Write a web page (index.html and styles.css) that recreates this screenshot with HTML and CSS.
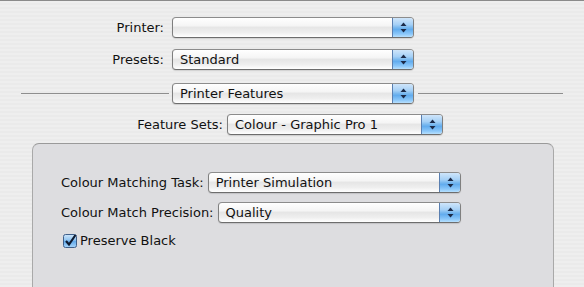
FILE: index.html
```html
<!DOCTYPE html>
<html>
<head>
<meta charset="utf-8">
<link rel="stylesheet" href="styles.css">
</head>
<body>
<div class="sheet">
  <div class="row row-printer">
    <span class="label">Printer:</span>
    <div class="popup popup-wide">
      <span class="popup-text"></span>
      <span class="popup-btn"><svg width="7" height="11" viewBox="0 0 7 11"><path d="M3.5 0.5 L6.5 4 H0.5 Z" fill="#1c2a48"/><path d="M3.5 10.5 L6.5 7 H0.5 Z" fill="#1c2a48"/></svg></span>
    </div>
  </div>
  <div class="row row-presets">
    <span class="label">Presets:</span>
    <div class="popup popup-wide">
      <span class="popup-text">Standard</span>
      <span class="popup-btn"><svg width="7" height="11" viewBox="0 0 7 11"><path d="M3.5 0.5 L6.5 4 H0.5 Z" fill="#1c2a48"/><path d="M3.5 10.5 L6.5 7 H0.5 Z" fill="#1c2a48"/></svg></span>
    </div>
  </div>
  <div class="row row-sep">
    <span class="rule rule-left"></span>
    <div class="popup popup-wide">
      <span class="popup-text">Printer Features</span>
      <span class="popup-btn"><svg width="7" height="11" viewBox="0 0 7 11"><path d="M3.5 0.5 L6.5 4 H0.5 Z" fill="#1c2a48"/><path d="M3.5 10.5 L6.5 7 H0.5 Z" fill="#1c2a48"/></svg></span>
    </div>
    <span class="rule rule-right"></span>
  </div>
  <div class="row row-sets">
    <span class="label-sets">Feature Sets:</span>
    <div class="popup popup-sets">
      <span class="popup-text">Colour - Graphic Pro 1</span>
      <span class="popup-btn"><svg width="7" height="11" viewBox="0 0 7 11"><path d="M3.5 0.5 L6.5 4 H0.5 Z" fill="#1c2a48"/><path d="M3.5 10.5 L6.5 7 H0.5 Z" fill="#1c2a48"/></svg></span>
    </div>
  </div>
  <div class="panel">
    <div class="prow prow-first">
      <span class="plabel">Colour Matching Task:</span>
      <div class="popup popup-fill">
        <span class="popup-text">Printer Simulation</span>
        <span class="popup-btn"><svg width="7" height="11" viewBox="0 0 7 11"><path d="M3.5 0.5 L6.5 4 H0.5 Z" fill="#1c2a48"/><path d="M3.5 10.5 L6.5 7 H0.5 Z" fill="#1c2a48"/></svg></span>
      </div>
    </div>
    <div class="prow prow-second">
      <span class="plabel">Colour Match Precision:</span>
      <div class="popup popup-fill">
        <span class="popup-text">Quality</span>
        <span class="popup-btn"><svg width="7" height="11" viewBox="0 0 7 11"><path d="M3.5 0.5 L6.5 4 H0.5 Z" fill="#1c2a48"/><path d="M3.5 10.5 L6.5 7 H0.5 Z" fill="#1c2a48"/></svg></span>
      </div>
    </div>
    <label class="check-row">
      <span class="checkbox"><svg width="14" height="14" viewBox="0 0 14 14"><defs><linearGradient id="cb" x1="0" y1="0" x2="0" y2="1"><stop offset="0" stop-color="#cfe6fb"/><stop offset="0.45" stop-color="#8ec3f0"/><stop offset="0.5" stop-color="#5ea7ea"/><stop offset="1" stop-color="#a9d6fb"/></linearGradient></defs><rect x="0.5" y="0.5" width="13" height="13" rx="2" fill="url(#cb)" stroke="#3f5f8a"/><path d="M3 7 L6 10.5 L12.5 1" fill="none" stroke="#0e1a30" stroke-width="2.2"/></svg></span>
      <span class="check-text">Preserve Black</span>
    </label>
  </div>
</div>
</body>
</html>
```
FILE: styles.css
```css
html, body {
  margin: 0;
  padding: 0;
}
body {
  width: 584px;
  height: 287px;
  overflow: hidden;
  background: #ececec;
  font-family: "DejaVu Sans", sans-serif;
  font-size: 13px;
  color: #111;
}
.sheet {
  height: 287px;
  box-sizing: border-box;
  border-top: 1px solid #8a8a8a;
  overflow: hidden;
  background: repeating-linear-gradient(#eeeeee 0, #eeeeee 2px, #eaeaea 2px, #eaeaea 4px);
}
.row {
  display: flex;
  align-items: center;
  height: 21px;
}
.row-printer { margin-top: 16px; }
.row-presets { margin-top: 11px; }
.row-sep { margin-top: 13px; }
.row-sets { margin-top: 10px; }
.label {
  width: 172px;
  text-align: right;
  padding-right: 8px;
  box-sizing: border-box;
}
.label-sets {
  width: 223px;
  text-align: right;
  padding-right: 4px;
}
.rule {
  height: 1px;
  background: #8e8e8e;
}
.rule-left { margin-left: 21px; width: 148px; margin-right: 3px; }
.rule-right { margin-left: 4px; width: 145px; }

.popup {
  display: flex;
  height: 21px;
  box-sizing: border-box;
  border: 1px solid #7f7f7f;
  border-top-color: #8c8c8c;
  border-bottom-color: #6d6d6d;
  border-radius: 4px;
  background: linear-gradient(#ffffff 0, #f5f5f5 40%, #e6e6e6 50%, #eeeeee 75%, #ffffff 100%);
  box-shadow: 0 1px 1px rgba(0,0,0,0.12);
  overflow: hidden;
}
.popup-wide { width: 242px; }
.popup-sets { width: 216px; }
.popup-fill { flex: 1; }
.popup-text {
  flex: 1;
  padding-left: 7px;
  line-height: 19px;
  white-space: nowrap;
  overflow: hidden;
}
.popup-btn {
  width: 20px;
  display: flex;
  align-items: center;
  justify-content: center;
  border-left: 1px solid #5a7fb0;
  background: linear-gradient(#cfe5fa 0, #a5d0f6 35%, #7ab9ef 50%, #62acee 60%, #8cc8fa 85%, #b8e0fd 100%);
}

.panel {
  margin: 8px 0 0 32px;
  width: 522px;
  height: 144px;
  box-sizing: border-box;
  border: 1px solid #a9a9a9;
  border-top-color: #9a9a9a;
  border-bottom: none;
  border-radius: 7px 7px 0 0;
  background: #dddde0;
  padding: 28px 92px 0 28px;
}
.prow {
  display: flex;
  align-items: center;
  height: 21px;
}
.prow-second { margin-top: 9px; }
.plabel {
  padding-right: 4px;
  white-space: nowrap;
}
.check-row {
  display: flex;
  align-items: center;
  margin-top: 10px;
  margin-left: 2px;
}
.checkbox {
  width: 14px;
  height: 14px;
  display: flex;
}
.check-text {
  margin-left: 3px;
}
```
